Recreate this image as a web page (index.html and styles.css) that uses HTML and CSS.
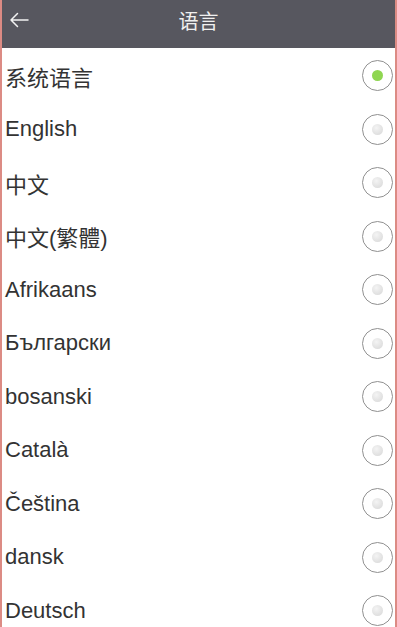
FILE: index.html
```html
<!DOCTYPE html>
<html lang="zh">

<head>
    <meta charset="UTF-8">
    <meta name="viewport" content="width=device-width, initial-scale=1.0">
    <title>语言</title>
    <link rel="stylesheet" href="styles.css">
</head>

<body>
    <div class="page">
        <div class="header">
            <span class="back">
                <svg width="20" height="16" viewBox="0 0 20 16">
                    <path d="M19 8H2M8.5 1.5L2 8l6.5 6.5" fill="none" stroke="#f2f2f2" stroke-width="1.5" stroke-linecap="round" stroke-linejoin="round" />
                </svg>
            </span>
            <h1>语言</h1>
        </div>

        <ul class="list">
            <li class="item"><span>系统语言</span><i class="radio checked"></i></li>
            <li class="item"><span>English</span><i class="radio"></i></li>
            <li class="item"><span>中文</span><i class="radio"></i></li>
            <li class="item"><span>中文(繁體)</span><i class="radio"></i></li>
            <li class="item"><span>Afrikaans</span><i class="radio"></i></li>
            <li class="item"><span>Български</span><i class="radio"></i></li>
            <li class="item"><span>bosanski</span><i class="radio"></i></li>
            <li class="item"><span>Català</span><i class="radio"></i></li>
            <li class="item"><span>Čeština</span><i class="radio"></i></li>
            <li class="item"><span>dansk</span><i class="radio"></i></li>
            <li class="item"><span>Deutsch</span><i class="radio"></i></li>
        </ul>
    </div>
</body>

</html>
```

FILE: styles.css
```css
* {
    margin: 0;
    padding: 0;
    list-style: none;
    box-sizing: border-box;
}

body {
    font-family: "Liberation Sans", "Noto Sans CJK SC", sans-serif;
    background: #fff;
    overflow: hidden;
}

.page {
    width: 397px;
    height: 627px;
    border-left: 2px solid #dc8b84;
    border-right: 2px solid #dc8b84;
    overflow: hidden;
}

.header {
    height: 48px;
    background: #57575f;
    display: flex;
    align-items: center;
    justify-content: center;
    position: relative;
}

.header h1 {
    font-size: 20px;
    font-weight: normal;
    color: #f0f0f0;
    margin-top: -7px;
}

.back {
    position: absolute;
    left: 7px;
    top: 12px;
    display: flex;
}

.item {
    height: 53.5px;
    display: flex;
    align-items: center;
    justify-content: space-between;
    padding: 2px 2px 0 3px;
}

.item span {
    font-size: 22px;
    color: #333;
}

.radio {
    width: 31px;
    height: 31px;
    border: 1.5px solid #909090;
    border-radius: 50%;
    display: flex;
    align-items: center;
    justify-content: center;
}

.radio::after {
    content: "";
    width: 11px;
    height: 11px;
    border-radius: 50%;
    background: radial-gradient(circle at 40% 35%, #f4f4f4, #d6d6d6);
}

.radio.checked::after {
    background: #8fd651;
}
```
